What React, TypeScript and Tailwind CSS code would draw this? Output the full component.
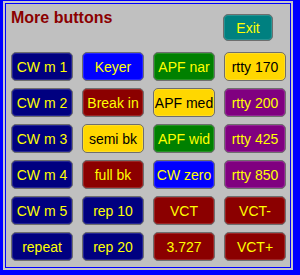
const rows: [string, string][][] = [
  [["CW m 1", "navy"], ["Keyer", "blue"], ["APF nar", "green"], ["rtty 170", "yellow"]],
  [["CW m 2", "navy"], ["Break in", "red"], ["APF med", "yellow"], ["rtty 200", "purple"]],
  [["CW m 3", "navy"], ["semi bk", "yellow"], ["APF wid", "green"], ["rtty 425", "purple"]],
  [["CW m 4", "navy"], ["full bk", "red"], ["CW zero", "blue"], ["rtty 850", "purple"]],
  [["CW m 5", "navy"], ["rep 10", "navy"], ["VCT", "red"], ["VCT-", "red"]],
  [["repeat", "navy"], ["rep 20", "navy"], ["3.727", "red"], ["VCT+", "red"]],
];

const colors: Record<string, string> = {
  navy: "bg-[#000080] text-[#ffff00]",
  blue: "bg-[#0000ff] text-[#ffff00]",
  green: "bg-[#008000] text-[#ffff00]",
  yellow: "bg-[#ffd700] text-black",
  purple: "bg-[#800080] text-[#ffff00]",
  red: "bg-[#8b0000] text-[#ffff00]",
  teal: "bg-[#008080] text-[#ffff00]",
};

function Btn({ label, color, className = "" }: { label: string; color: string; className?: string }) {
  return (
    <button
      className={`flex items-center justify-center rounded-[5px] border border-[#6e6e6e] text-[14px] leading-none shadow-[inset_0_0_0_1px_rgba(255,255,255,0.15)] ${colors[color]} ${className}`}
    >
      {label}
    </button>
  );
}

export default function App() {
  return (
    <div className="w-[300px] h-[275px] bg-[#0000ff] pl-[3px] pt-[1px] pr-[7px] pb-[5px]" style={{ fontFamily: '"Liberation Sans", Arial, sans-serif' }}>
      <div className="h-full w-full bg-[#c8c8c8] p-[2px]">
        <div className="h-full w-full border border-[#0000ff] bg-[#c0c0c0] pl-[5px] pt-[5px]">
          <div className="flex h-[43px] w-[275px] items-start justify-between">
            <div className="text-[16px] font-bold leading-[18px] text-[#8b0000]">More buttons</div>
            <Btn label="Exit" color="teal" className="mt-[5px] mr-[13px] h-[27px] w-[50px]" />
          </div>
          <div className="grid grid-cols-[repeat(4,62px)] gap-x-[9px] gap-y-[7px]">
            {rows.flat().map(([label, color]) => (
              <Btn key={label} label={label} color={color} className="h-[29px]" />
            ))}
          </div>
        </div>
      </div>
    </div>
  );
}
